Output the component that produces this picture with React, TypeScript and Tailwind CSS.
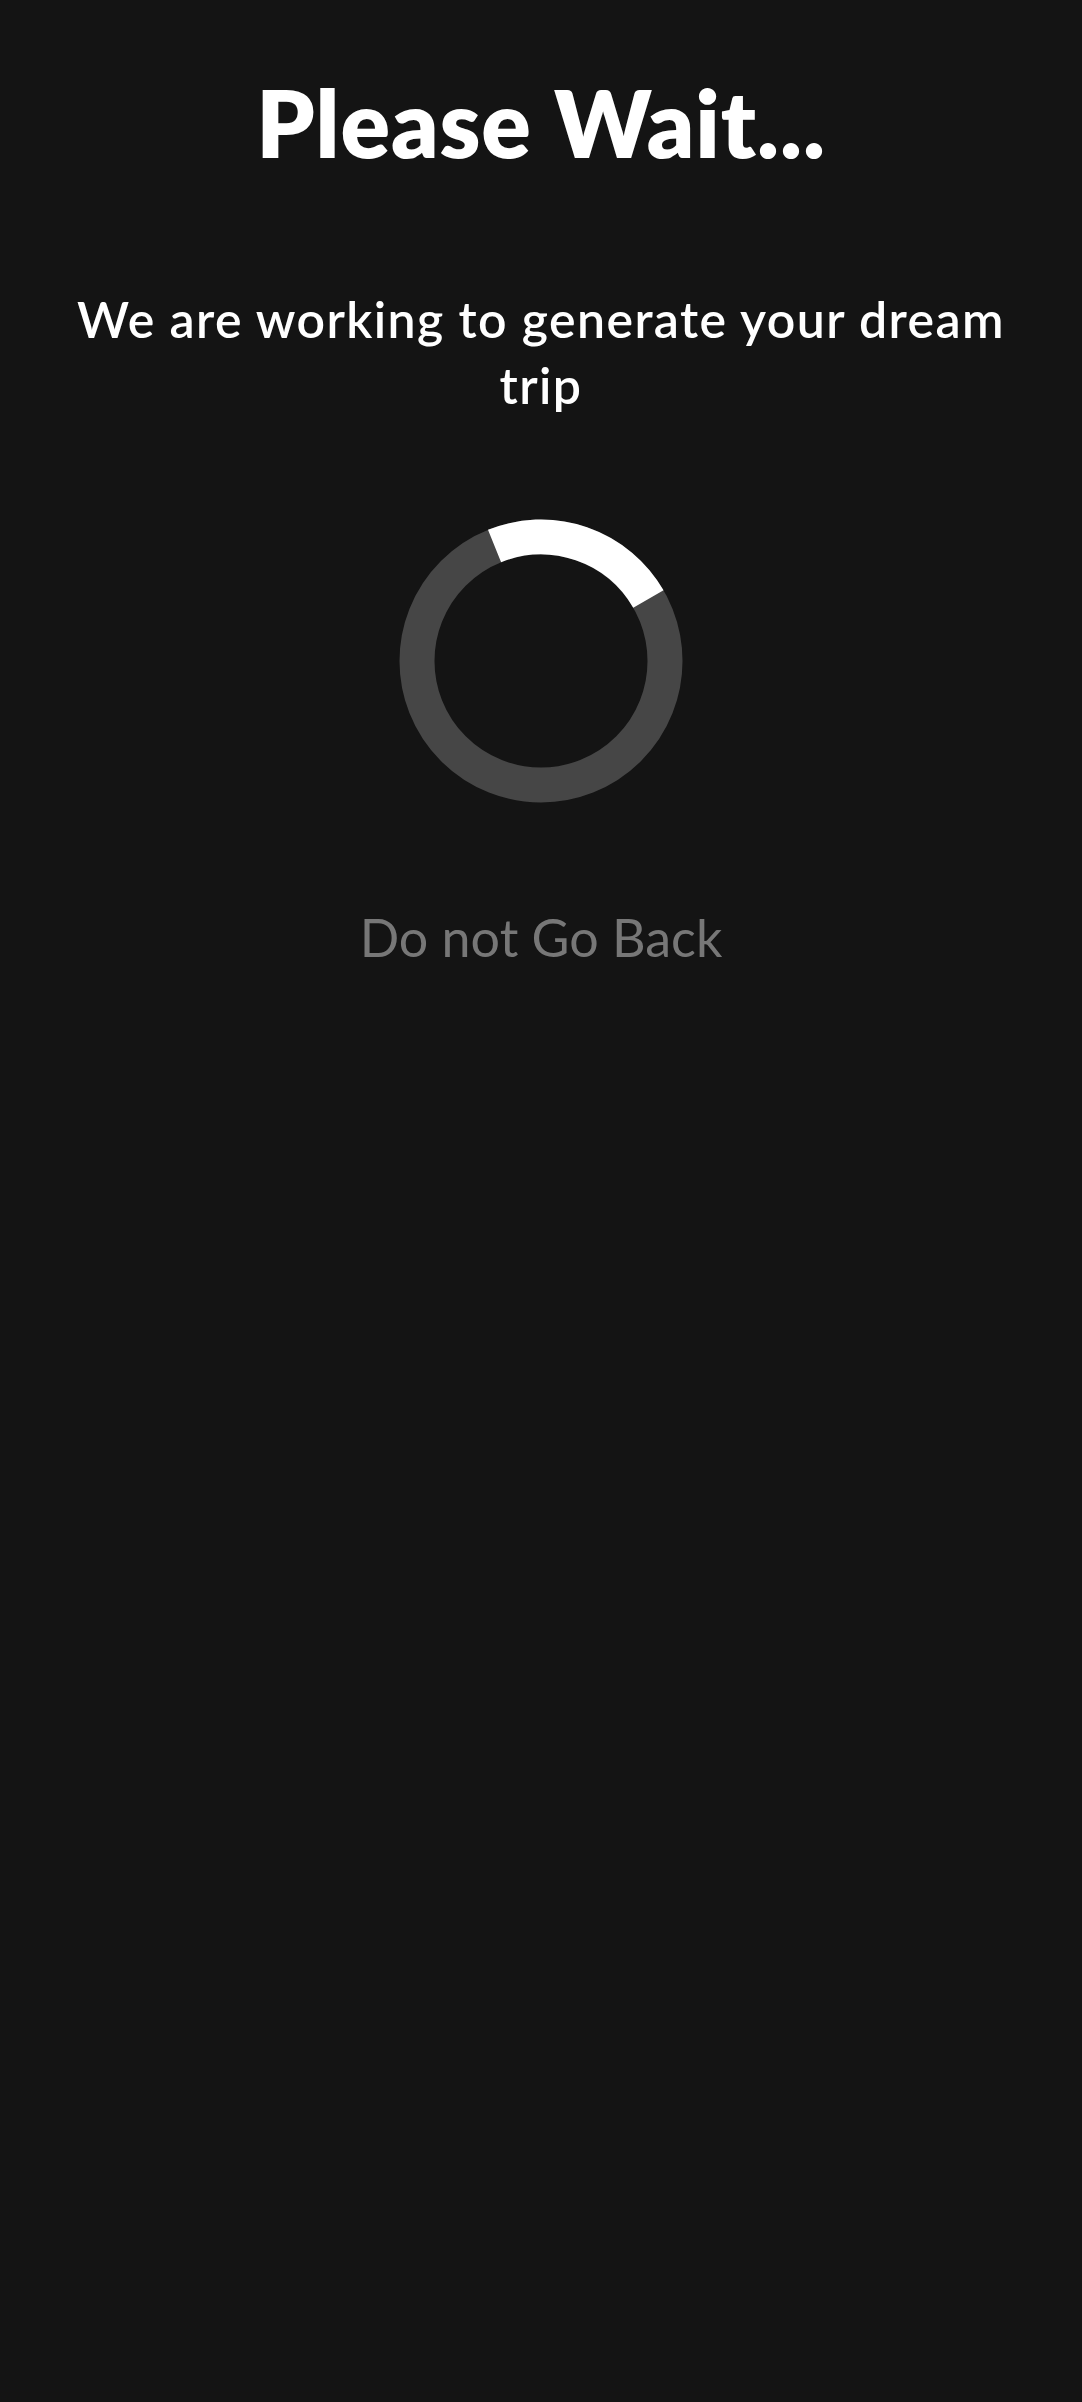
import React from "react";

function Spinner() {
  return (
    <svg width="284" height="284" viewBox="0 0 284 284" className="block">
      <circle cx="142" cy="142" r="124" fill="none" stroke="#464646" strokeWidth="35" />
      <path
        d="M 95.55 27.03 A 124 124 0 0 1 249.39 80"
        fill="none"
        stroke="#ffffff"
        strokeWidth="35"
        strokeLinecap="butt"
      />
    </svg>
  );
}

export default function App() {
  return (
    <div
      className="min-h-[2402px] w-full bg-[#141414] flex flex-col items-center text-center px-[50px]"
      style={{ fontFamily: "Lato, 'Noto Sans', sans-serif" }}
    >
      <h1 className="pt-[77px] text-[92px] leading-[92px] font-extrabold tracking-[0.01em] text-white">
        Please Wait...
      </h1>
      <p className="mt-[117px] max-w-[960px] text-[50px] leading-[66px] font-semibold tracking-[0.028em] text-white">
        We are working to generate your dream trip
      </p>
      <div className="mt-[101px]">
        <Spinner />
      </div>
      <p className="mt-[108px] text-[52px] leading-[52px] font-normal text-[#777777]">
        Do not Go Back
      </p>
    </div>
  );
}
